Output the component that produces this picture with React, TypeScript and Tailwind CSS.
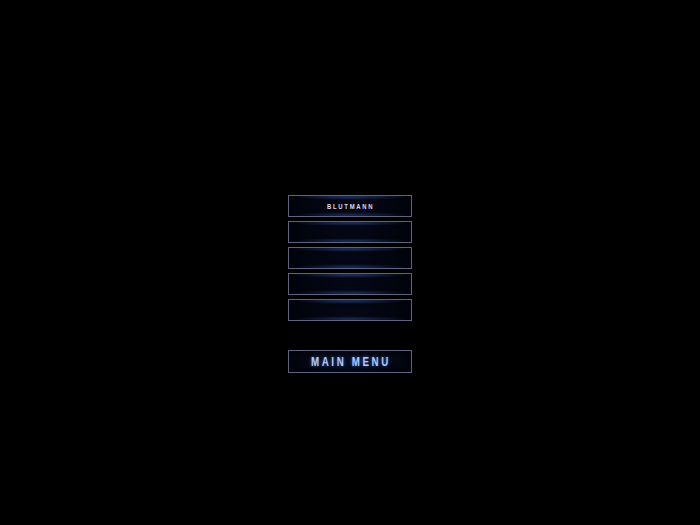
const glow =
  "bg-[radial-gradient(48%_3px_at_50%_1px,rgba(60,100,190,0.45),transparent),radial-gradient(48%_3px_at_50%_calc(100%-1px),rgba(60,100,190,0.4),transparent),radial-gradient(60%_90%_at_50%_50%,#040817,#010209)]"

function Slot({ label }: { label?: string }) {
  return (
    <div className={`h-[22px] w-full border border-[#5e6480] ${glow} flex items-center justify-center`}>
      {label && (
        <span className="text-[7px] font-bold tracking-[2px] text-[#dcdcf2] scale-x-[0.85] leading-none pl-[2px]">
          {label}
        </span>
      )}
    </div>
  )
}

export default function App() {
  return (
    <div className="w-[700px] h-[525px] bg-black overflow-hidden" style={{ fontFamily: '"Liberation Sans", Arial, sans-serif' }}>
      <div className="mx-auto w-[124px] pt-[195px] flex flex-col">
        <div className="flex flex-col gap-[4px]">
          <Slot label="BLUTMANN" />
          <Slot />
          <Slot />
          <Slot />
          <Slot />
        </div>
        <div className="mt-[29px] h-[23px] border border-[#5e6480] bg-[radial-gradient(60%_90%_at_50%_50%,#060b1e,#010209)] flex items-center justify-center">
          <span className="text-[13px] font-bold tracking-[3.5px] text-[#b4c8f6] scale-x-[0.75] leading-none pl-[3px] [text-shadow:0_0_4px_rgba(90,140,255,0.7)]">
            MAIN MENU
          </span>
        </div>
      </div>
    </div>
  )
}
